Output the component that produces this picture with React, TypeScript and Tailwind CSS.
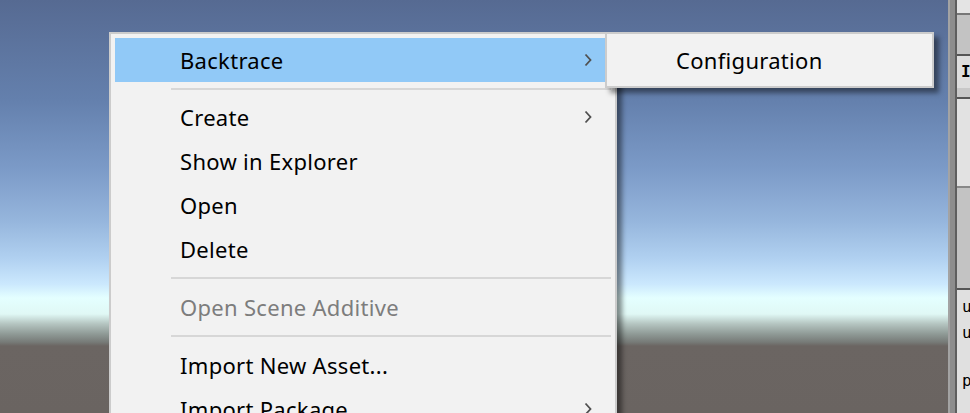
import React from "react";

function Chevron() {
  return (
    <svg width="8" height="14" viewBox="0 0 8 14" className="shrink-0">
      <path d="M1.5 1.5 L6.5 7 L1.5 12.5" fill="none" stroke="#505050" strokeWidth="1.8" />
    </svg>
  );
}

type Item = { label: string; sub?: boolean; disabled?: boolean; active?: boolean };

function Row({ label, sub, disabled, active }: Item) {
  return (
    <div
      className={`flex h-[44px] items-center pl-[65px] pr-[19px] ${active ? "bg-[#91c9f7]" : ""}`}
    >
      <span className={`flex-1 ${disabled ? "text-[#7d7d7d]" : "text-black"}`}>{label}</span>
      {sub && <Chevron />}
    </div>
  );
}

function Separator() {
  return (
    <div className="flex h-[14px] items-center pl-[56px]">
      <div className="h-[2px] w-full bg-[#d7d7d7]" />
    </div>
  );
}

export default function App() {
  return (
    <div
      className="flex h-[413px] w-[970px] overflow-hidden text-[22px] tracking-[0.3px]"
      style={{ fontFamily: '"Noto Sans", "Open Sans", sans-serif' }}
    >
      <div className="relative flex-1 bg-[linear-gradient(to_bottom,#566a92_0px,#6480ad_100px,#7c9bc8_170px,#95b5dc_220px,#b0d0f0_258px,#cbe8fd_284px,#e4ffff_298px,#e0f8f5_314px,#b4c4c0_324px,#8f9a96_334px,#777b78_342px,#6b6562_346px,#6a6461_413px)]">
        {/* main context menu */}
        <div className="absolute left-[109px] top-[32px] w-[508px] border-2 border-[#cccccc] bg-[#f2f2f2] p-[4px] shadow-[5px_5px_5px_rgba(0,0,0,0.45)]">
          <Row label="Backtrace" sub active />
          <div className="flex h-[13px] items-center pl-[56px]">
            <div className="h-[2px] w-full bg-[#d7d7d7]" />
          </div>
          <Row label="Create" sub />
          <Row label="Show in Explorer" />
          <Row label="Open" />
          <Row label="Delete" />
          <Separator />
          <Row label="Open Scene Additive" disabled />
          <Separator />
          <Row label="Import New Asset..." />
          <Row label="Import Package" sub />
          <Row label="Export Package..." />
        </div>

        {/* submenu */}
        <div className="absolute left-[605px] top-[32px] w-[329px] border-2 border-[#cccccc] bg-[#f2f2f2] py-[4px] shadow-[5px_5px_5px_rgba(0,0,0,0.45)]">
          <div className="flex h-[44px] items-center pl-[69px] text-black">Configuration</div>
        </div>
      </div>

      {/* splitter */}
      <div className="w-[9px] border-l-2 border-r-2 border-[#a3a3a3] border-r-[#5e5e5e] bg-[#8d8d8d]" />

      {/* inspector panel edge */}
      <div
        className="flex w-[13px] flex-col overflow-hidden text-[16px] tracking-normal text-black"
        style={{ fontFamily: '"DejaVu Sans Mono", monospace' }}
      >
        <div className="h-[15px] border-b-2 border-[#777777] bg-[#e4e4e4]" />
        <div className="h-[41px] border-b-2 border-[#555555] bg-[#c3c3c3]" />
        <div className="flex h-[32px] items-center bg-[#dedede] pl-[4px] font-bold">I</div>
        <div className="h-[11px] border-b-2 border-[#555555] bg-[#c8c8c8]" />
        <div className="h-[89px] border-b-2 border-[#888888] bg-[#e2e2e2]" />
        <div className="h-[102px] border-b-2 border-[#555555] bg-[#c3c3c3]" />
        <div className="flex flex-1 flex-col bg-[#e0e0e0] pl-[5px] pt-[4px] leading-[26px]">
          <span>u</span>
          <span>u</span>
          <span className="mt-[22px]">p</span>
        </div>
      </div>
    </div>
  );
}
